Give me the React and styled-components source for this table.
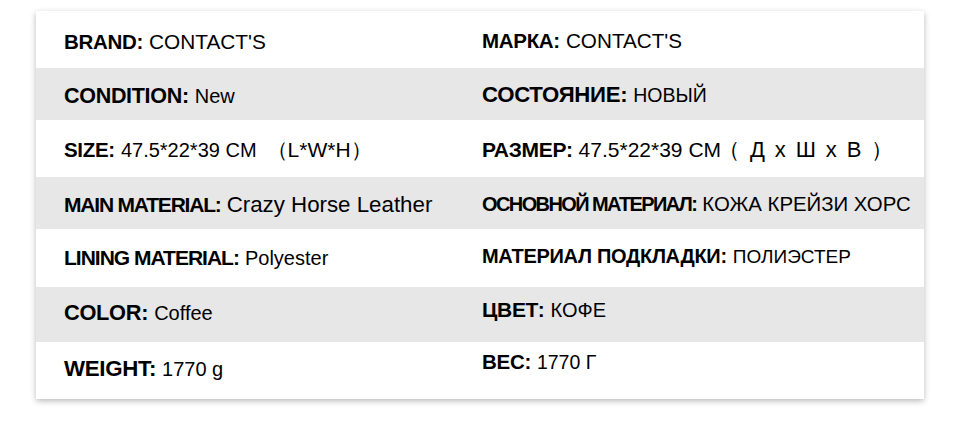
import React from "react";
import styled, { createGlobalStyle } from "styled-components";

const GlobalStyle = createGlobalStyle`
  html, body {
    margin: 0;
    padding: 0;
    background: #ffffff;
  }
  body {
    font-family: "Liberation Sans", Arial, sans-serif;
    color: #000;
  }
`;

// sizes and baselines vary row to row in the original artwork,
// so each spec carries its own (ls = label size, vs = value size, base = baseline)
const rows = [
  {
    height: 57,
    en: { label: "BRAND:", value: "CONTACT'S", ls: 20.5, vs: 20.8, base: 38 },
    ru: { label: "МАРКА:", value: "CONTACT'S", ls: 20.5, vs: 20.7, base: 37 },
  },
  {
    height: 52,
    en: { label: "CONDITION:", value: "New", ls: 21.5, vs: 20, base: 35 },
    ru: { label: "СОСТОЯНИЕ:", value: "НОВЫЙ", ls: 22.2, vs: 19.5, base: 34 },
  },
  {
    height: 57,
    en: {
      label: "SIZE:",
      value: "47.5*22*39 CM",
      extra: "（L*W*H）",
      ls: 20.5,
      vs: 20,
      xs: 21,
      xm: 10,
      base: 37,
    },
    ru: {
      label: "РАЗМЕР:",
      value: "47.5*22*39 CM",
      extra: "（ Д x Ш x В ）",
      ls: 21,
      vs: 21,
      xs: 22,
      xsp: 1.9,
      xm: -3,
      base: 37,
    },
  },
  {
    height: 52,
    en: { label: "MAIN MATERIAL:", value: "Crazy Horse Leather", ls: 21, tight: -1.2, vs: 22.3, base: 35 },
    ru: { label: "ОСНОВНОЙ МАТЕРИАЛ:", value: "КОЖА КРЕЙЗИ ХОРС", ls: 20, tight: -1.6, vs: 20.4, base: 34 },
  },
  {
    height: 58,
    en: { label: "LINING MATERIAL:", value: "Polyester", ls: 21, tight: -1, vs: 20, base: 36 },
    ru: { label: "МАТЕРИАЛ ПОДКЛАДКИ:", value: "ПОЛИЭСТЕР", ls: 20, vs: 19, base: 34 },
  },
  {
    height: 55,
    en: { label: "COLOR:", value: "Coffee", ls: 21.8, vs: 20, base: 33 },
    ru: { label: "ЦВЕТ:", value: "КОФЕ", ls: 21, vs: 20, base: 30 },
  },
  {
    height: 57,
    en: { label: "WEIGHT:", value: "1770 g", ls: 22.3, vs: 20, base: 34 },
    ru: { label: "ВЕС:", value: "1770 Г", ls: 20.5, vs: 19.5, base: 27 },
  },
];

const Spec = ({ label, value, extra, ls, vs, xs, xsp, xm, tight, base }) => (
  <Cell $base={base}>
    <Label $size={ls} $tight={tight}>
      {label}
    </Label>
    <Value $size={vs}>{value}</Value>
    {extra && (
      <Extra $size={xs} $spacing={xsp} $margin={xm}>
        {extra}
      </Extra>
    )}
  </Cell>
);

const App = () => (
  <>
    <GlobalStyle />
    <Page>
      <Table>
        {rows.map((row, index) => (
          <Row key={index} $grey={index % 2 === 1} $height={row.height}>
            <Spec {...row.en} />
            <Spec {...row.ru} />
          </Row>
        ))}
      </Table>
    </Page>
  </>
);
export default App;

const Page = styled.div`
  width: 960px;
  height: 425px;
  padding: 11px 0 0 36px;
  box-sizing: border-box;
`;

const Table = styled.div`
  width: 888px;
  background: #fff;
  box-shadow: 0 2px 6px rgba(0, 0, 0, 0.28);
`;

const Row = styled.div`
  display: grid;
  grid-template-columns: 418px 470px;
  height: ${(p) => p.$height}px;
  background: ${(p) => (p.$grey ? "#e7e7e7" : "#ffffff")};
`;

const Cell = styled.div`
  display: flex;
  align-items: baseline;
  padding: ${(p) => p.$base - 19}px 0 0 28px;
  white-space: nowrap;
  line-height: 24px;
  box-sizing: border-box;
`;

const Label = styled.span`
  font-weight: 700;
  font-size: ${(p) => p.$size}px;
  letter-spacing: ${(p) => (p.$tight ? p.$tight : -0.3)}px;
  margin-right: 6px;
`;

const Value = styled.span`
  font-size: ${(p) => p.$size}px;
`;

const Extra = styled.span`
  margin-left: ${(p) => p.$margin}px;
  font-size: ${(p) => p.$size}px;
  letter-spacing: ${(p) => p.$spacing || 0}px;
`;
